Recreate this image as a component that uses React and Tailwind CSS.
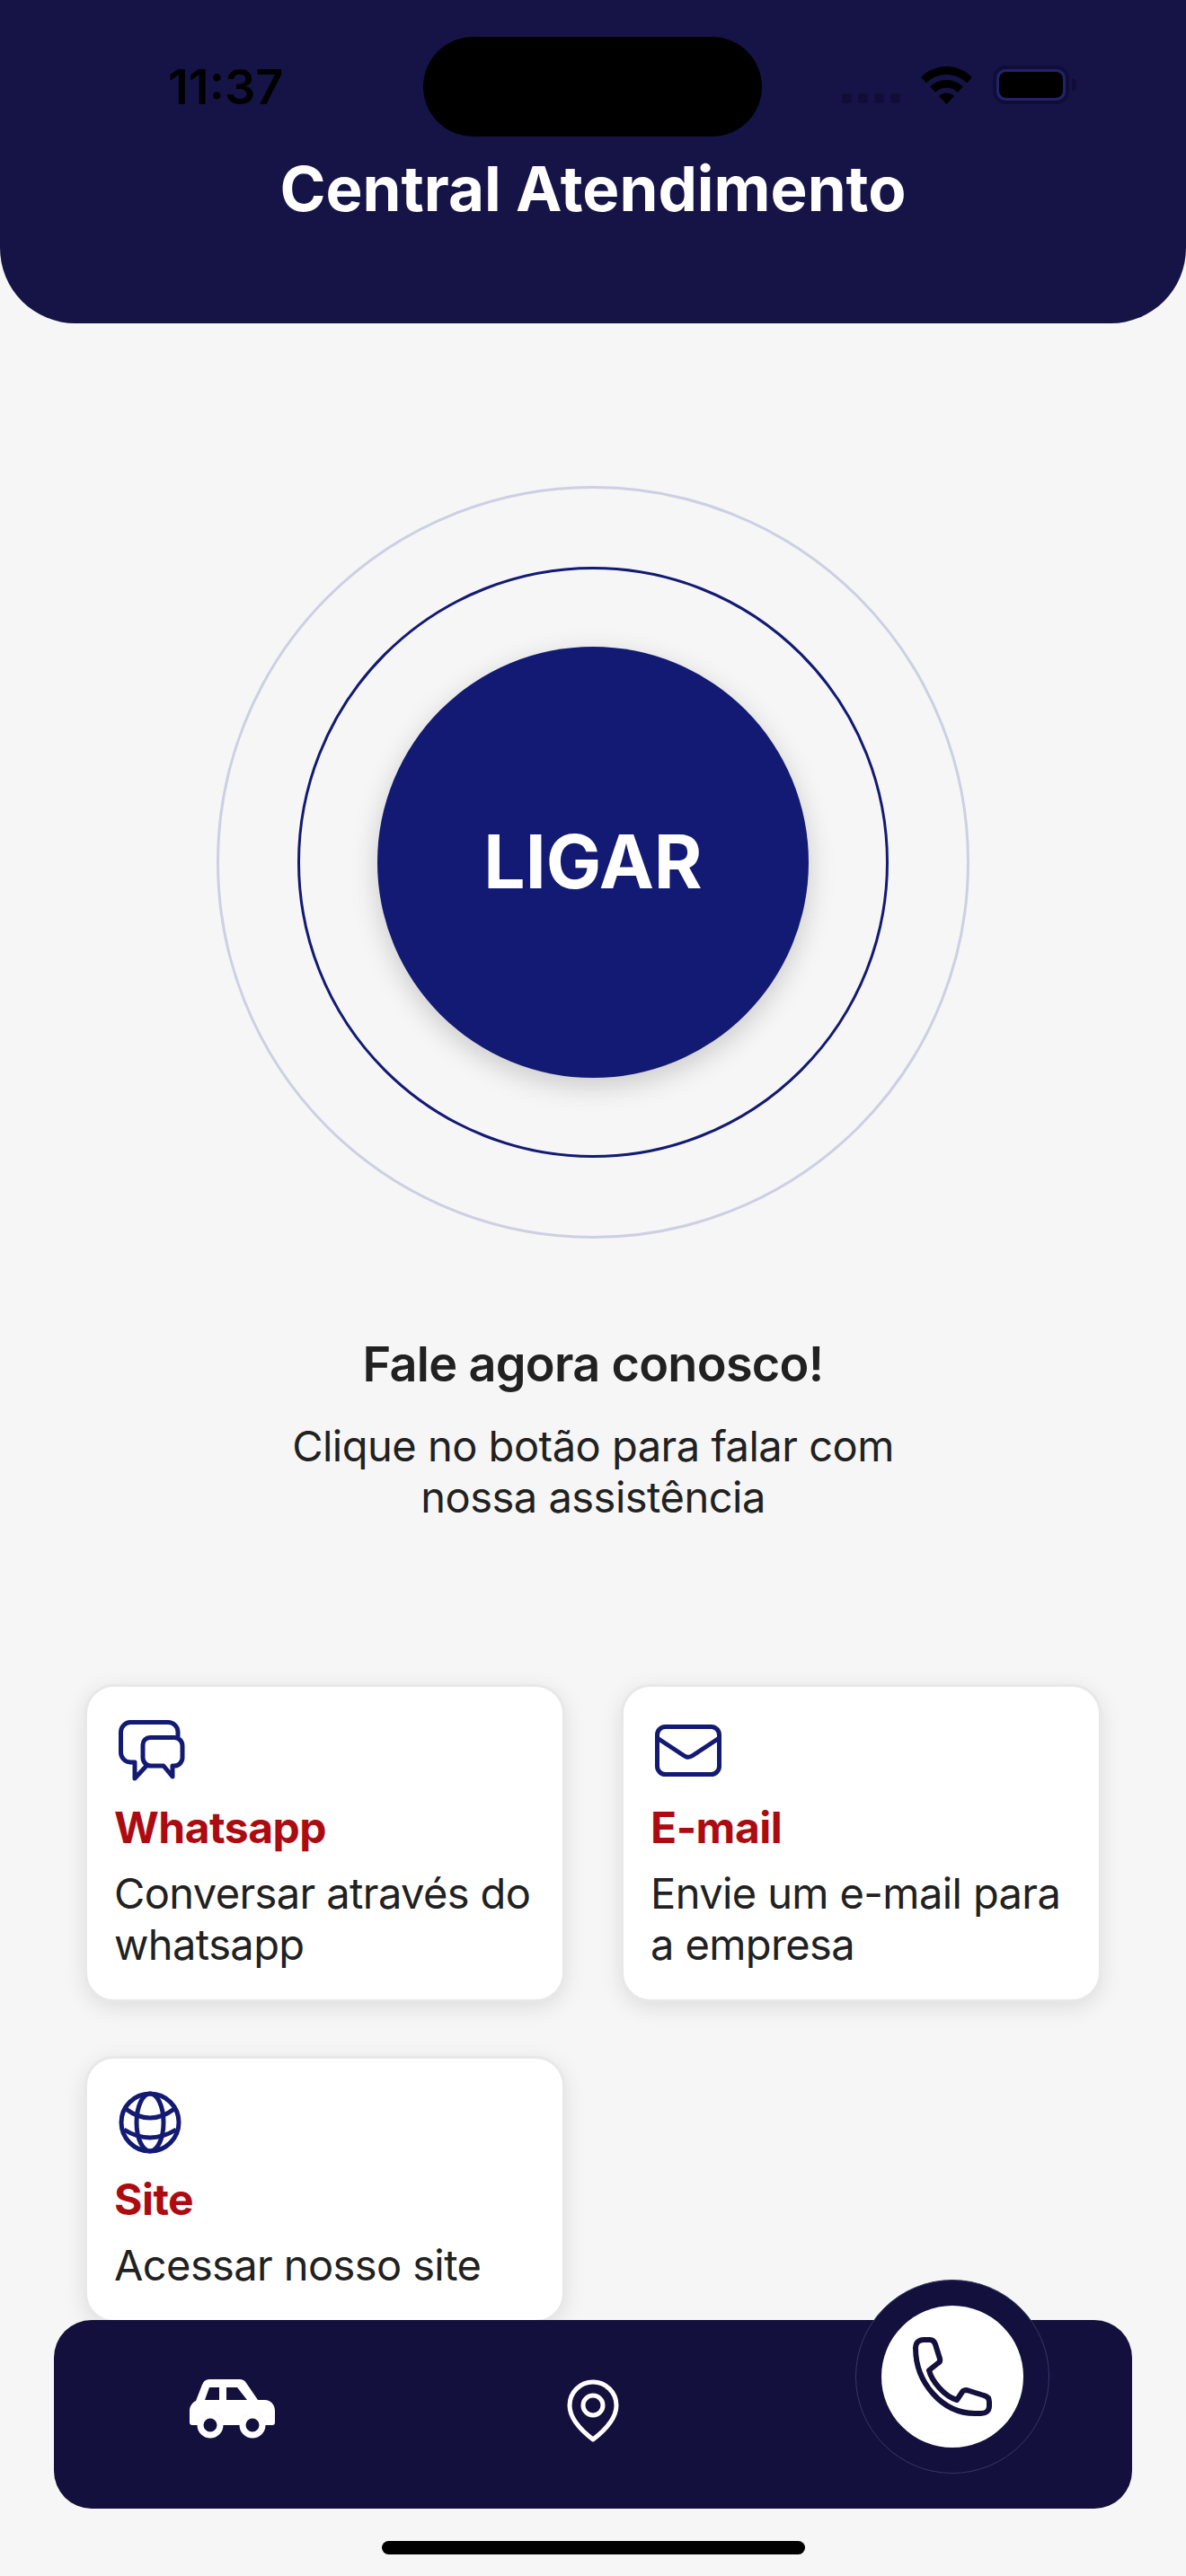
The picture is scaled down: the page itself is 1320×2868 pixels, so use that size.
import React from 'react';

function StatusBar() {
  return (
    <div className="flex h-[160px] items-start pt-[41px] pl-[187px]">
      <span className="mt-[26px] w-[284px] text-[54px] leading-[60px] font-semibold text-black">11:37</span>
      <div className="h-[111px] w-[377px] rounded-full bg-black" />
      <div className="mt-[32px] ml-[89px] flex items-end">
        <div className="mb-[1px] flex gap-[7px]">
          <span className="h-[11px] w-[11px] rounded-[3px] bg-[#100e38]" />
          <span className="h-[11px] w-[11px] rounded-[3px] bg-[#100e38]" />
          <span className="h-[11px] w-[11px] rounded-[3px] bg-[#100e38]" />
          <span className="h-[11px] w-[11px] rounded-[3px] bg-[#100e38]" />
        </div>
        <svg className="ml-[23px]" width="57" height="42" viewBox="0 0 57 42" fill="#000">
          <path d="M28.5 0C17.5 0 7.7 4.4 0 12l6 6.5C12 12.5 19.8 9 28.5 9s16.5 3.5 22.5 9.5l6-6.5C49.3 4.4 39.5 0 28.5 0z" />
          <path d="M28.5 15c-7.2 0-13.5 2.8-18.3 7.5l6 6.3c3.3-3.2 7.6-5 12.3-5s9 1.8 12.3 5l6-6.3C42 17.8 35.7 15 28.5 15z" />
          <path d="M28.5 29.5c-3.4 0-6.4 1.3-8.5 3.5l8.5 9 8.5-9c-2.1-2.2-5.1-3.5-8.5-3.5z" />
        </svg>
        <div className="ml-[23px] flex items-center">
          <div className="h-[43px] w-[85px] rounded-[14px] border-[4px] border-[#100e38] bg-[#24226a] p-[3px]">
            <div className="h-full w-full rounded-[8px] bg-black" />
          </div>
          <span className="ml-[3px] h-[15px] w-[5px] rounded-r-full bg-[#100e38]" />
        </div>
      </div>
    </div>
  );
}

function ChatIcon() {
  return (
    <svg width="74" height="68" viewBox="0 0 74 68" fill="none" stroke="#131a73" strokeWidth="5" strokeLinejoin="round" strokeLinecap="round">
      <path d="M66 18V13A11 11 0 0 0 55 2.5H13A11 11 0 0 0 2.5 13V36A11 11 0 0 0 13 47H18V65L31 51" />
      <path d="M35 19.5H62A9 9 0 0 1 71 28.5V42A9 9 0 0 1 62 51H60V63L50 51H36A9 9 0 0 1 27 42V27.5A8 8 0 0 1 35 19.5Z" />
    </svg>
  );
}

function MailIcon() {
  return (
    <svg width="74" height="58" viewBox="0 0 74 58" fill="none" stroke="#131a73" strokeWidth="5" strokeLinejoin="round" strokeLinecap="round">
      <rect x="2.5" y="2.5" width="69" height="53" rx="9" />
      <path d="M4 16L32 34.5A9 9 0 0 0 42 34.5L70 16" />
    </svg>
  );
}

function GlobeIcon() {
  return (
    <svg width="70" height="70" viewBox="0 0 70 70" fill="none" stroke="#131a73" strokeWidth="5">
      <circle cx="35" cy="35" r="32" />
      <ellipse cx="35" cy="35" rx="15" ry="32" />
      <path d="M8 20Q35 40 62 20" />
      <path d="M6 43Q35 61 64 43" />
    </svg>
  );
}

function CarIcon() {
  return (
    <svg width="95" height="66" viewBox="0 0 95 66" fill="#fff" fillRule="evenodd">
      <path d="M22 0H56C59 0 61 1 63 4L76 23H84C90 23 95 28 95 35V48C95 50 94 51 92 51H84A14 14 0 0 0 56 51H37A14 14 0 0 0 9 51H3C1 51 0 50 0 48V35C0 30 3 26 7 24L14 6C15.5 2 18 0 22 0ZM22 9L17 23H33V9ZM41 9V23H64L53 9Z" />
      <path d="M23 36.5A14.5 14.5 0 1 0 23 65.5A14.5 14.5 0 1 0 23 36.5ZM23 43.5A7.5 7.5 0 1 1 23 58.5A7.5 7.5 0 1 1 23 43.5Z" />
      <path d="M70 36.5A14.5 14.5 0 1 0 70 65.5A14.5 14.5 0 1 0 70 36.5ZM70 43.5A7.5 7.5 0 1 1 70 58.5A7.5 7.5 0 1 1 70 43.5Z" />
    </svg>
  );
}

function PinIcon() {
  return (
    <svg width="58" height="72" viewBox="0 0 58 72" fill="none" stroke="#fff" strokeWidth="5" strokeLinejoin="round">
      <path d="M29 67C16 57 3 44 3 29A26 26 0 0 1 55 29C55 44 42 57 29 67Z" />
      <circle cx="29" cy="29" r="11" />
    </svg>
  );
}

function PhoneIcon() {
  return (
    <svg width="90" height="90" viewBox="0 0 90 90" fill="none" stroke="#14103d" strokeWidth="6" strokeLinejoin="round">
      <path d="M4 13C4 7 8 4 13 4H20C23 4 25 6 26 9L31 25C31.5 27 31 29 29 30L19 38C22 50 36 67 50 71L56 62C57 60 59 60 61 60L80 66C84 67 86 70 86 73V78C86 83 82 86 77 86H70C34 86 4 52 4 13Z" />
    </svg>
  );
}

function OptionCard({ icon, title, text }) {
  return (
    <div className="rounded-[33px] border-[3px] border-[#e8e8e8] bg-white pt-[36px] pr-[31px] pb-[33px] pl-[30px] shadow-[0_6px_24px_rgba(0,0,0,0.1)]">
      <div className="flex h-[70px] items-center pl-[5px]">{icon}</div>
      <p className="mt-[22px] text-[48px] leading-[57px] font-bold tracking-[-0.5px] text-[#ad0b12]">{title}</p>
      <p className="mt-[16px] text-[47px] leading-[57px] tracking-[-0.6px] text-[#212121]">{text}</p>
    </div>
  );
}

export default function App() {
  return (
    <div className="flex h-[2868px] w-[1320px] flex-col overflow-hidden bg-[#f6f6f6] font-['Inter',sans-serif]">
      <header className="h-[360px] shrink-0 rounded-b-[84px] bg-[#161447]">
        <StatusBar />
        <h1 className="mt-[10px] text-center text-[69px] leading-[80px] font-bold text-white">Central Atendimento</h1>
      </header>

      <main className="flex min-h-0 flex-1 flex-col items-center">
        <div className="mt-[181px] flex h-[838px] w-[838px] shrink-0 items-center justify-center rounded-full border-[3px] border-[#cdcfe3]">
          <div className="flex h-[658px] w-[658px] items-center justify-center rounded-full border-[3px] border-[#131a73]">
            <button className="flex h-[480px] w-[480px] items-center justify-center rounded-full bg-[#131a73] text-[82px] leading-none font-bold text-white shadow-[0_9px_30px_rgba(0,0,0,0.18)]">
              LIGAR
            </button>
          </div>
        </div>

        <h2 className="mt-[107px] text-[54px] leading-[66px] font-semibold tracking-[-0.7px] text-[#212121]">Fale agora conosco!</h2>
        <p className="mt-[29px] w-[760px] text-center text-[47px] leading-[57px] tracking-[-0.5px] text-[#212121]">
          Clique no botão para falar com nossa assistência
        </p>

        <div className="mt-[180px] grid w-[1132px] shrink-0 grid-cols-2 items-start gap-x-[62px] gap-y-[60px]">
          <OptionCard icon={<ChatIcon />} title="Whatsapp" text="Conversar através do whatsapp" />
          <OptionCard icon={<MailIcon />} title="E-mail" text="Envie um e-mail para a empresa" />
          <OptionCard icon={<GlobeIcon />} title="Site" text="Acessar nosso site" />
        </div>
      </main>

      <nav className="relative mx-[60px] flex h-[210px] shrink-0 items-start rounded-[42px] bg-[#14103d] pt-[66px]">
        <div className="ml-[151px]"><CarIcon /></div>
        <div className="ml-[325px]"><PinIcon /></div>
        <div className="absolute top-[-45px] left-[892px] flex h-[216px] w-[216px] items-center justify-center rounded-full border border-[#3a3760] bg-[#14103d]">
          <div className="flex h-[158px] w-[158px] items-center justify-center rounded-full bg-white">
            <PhoneIcon />
          </div>
        </div>
      </nav>

      <div className="mt-[36px] mb-[24px] h-[15px] w-[471px] shrink-0 self-center rounded-full bg-black" />
    </div>
  );
}
